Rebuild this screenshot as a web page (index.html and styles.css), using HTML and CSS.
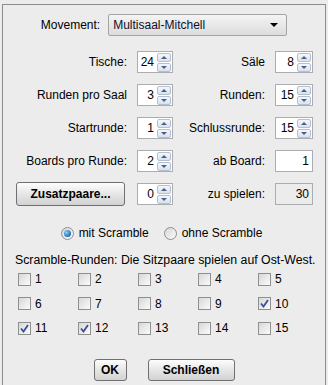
FILE: index.html
```html
<!DOCTYPE html>
<html lang="de">
<head>
    <meta charset="UTF-8">
    <title>Movement</title>
    <link rel="stylesheet" href="styles.css">
</head>
<body>
    <div class="panel">
        <div class="movement-row">
            <label>Movement:</label>
            <div class="combo">
                <span>Multisaal-Mitchell</span>
                <span class="combo-arrow"></span>
            </div>
        </div>

        <div class="form-grid">
            <label class="lbl">Tische:</label>
            <div class="spinner"><span class="value">24</span><div class="arrows"><span class="up"></span><span class="down"></span></div></div>
            <label class="lbl">Säle</label>
            <div class="spinner wide"><span class="value">8</span><div class="arrows"><span class="up"></span><span class="down"></span></div></div>

            <label class="lbl">Runden pro Saal</label>
            <div class="spinner"><span class="value">3</span><div class="arrows"><span class="up"></span><span class="down"></span></div></div>
            <label class="lbl">Runden:</label>
            <div class="spinner wide"><span class="value">15</span><div class="arrows"><span class="up"></span><span class="down"></span></div></div>

            <label class="lbl">Startrunde:</label>
            <div class="spinner"><span class="value">1</span><div class="arrows"><span class="up"></span><span class="down"></span></div></div>
            <label class="lbl">Schlussrunde:</label>
            <div class="spinner wide"><span class="value">15</span><div class="arrows"><span class="up"></span><span class="down"></span></div></div>

            <label class="lbl">Boards pro Runde:</label>
            <div class="spinner"><span class="value">2</span><div class="arrows"><span class="up"></span><span class="down"></span></div></div>
            <label class="lbl">ab Board:</label>
            <div class="field">1</div>

            <button class="btn extra">Zusatzpaare...</button>
            <div class="spinner"><span class="value">0</span><div class="arrows"><span class="up"></span><span class="down"></span></div></div>
            <label class="lbl">zu spielen:</label>
            <div class="field disabled">30</div>
        </div>

        <div class="radio-row">
            <span class="radio-option"><span class="radio checked"></span>mit Scramble</span>
            <span class="radio-option"><span class="radio"></span>ohne Scramble</span>
        </div>

        <p class="scramble-note">Scramble-Runden: Die Sitzpaare spielen auf Ost-West.</p>

        <div class="check-grid">
            <span class="check-option"><span class="box"></span>1</span>
            <span class="check-option"><span class="box"></span>2</span>
            <span class="check-option"><span class="box"></span>3</span>
            <span class="check-option"><span class="box"></span>4</span>
            <span class="check-option"><span class="box"></span>5</span>
            <span class="check-option"><span class="box"></span>6</span>
            <span class="check-option"><span class="box"></span>7</span>
            <span class="check-option"><span class="box"></span>8</span>
            <span class="check-option"><span class="box"></span>9</span>
            <span class="check-option"><span class="box checked"><svg viewBox="0 0 11 11"><path d="M2 5.5 L4.5 8.5 L9 2" /></svg></span>10</span>
            <span class="check-option"><span class="box checked"><svg viewBox="0 0 11 11"><path d="M2 5.5 L4.5 8.5 L9 2" /></svg></span>11</span>
            <span class="check-option"><span class="box checked"><svg viewBox="0 0 11 11"><path d="M2 5.5 L4.5 8.5 L9 2" /></svg></span>12</span>
            <span class="check-option"><span class="box"></span>13</span>
            <span class="check-option"><span class="box"></span>14</span>
            <span class="check-option"><span class="box"></span>15</span>
        </div>

        <div class="actions">
            <button class="btn ok">OK</button>
            <button class="btn close">Schließen</button>
        </div>
    </div>
</body>
</html>
```

FILE: styles.css
```css
body {
    margin: 0;
    background-color: #ececec;
    font-family: "Liberation Sans", Arial, sans-serif;
    font-size: 12px;
    color: #000;
}
.panel {
    margin: 4px 2px 0 2px;
    height: 381px;
    box-sizing: border-box;
    border: 1px solid #8c8c8c;
    border-bottom: none;
    padding: 9px 0 0 9px;
}
.movement-row {
    display: flex;
    align-items: center;
    justify-content: center;
    gap: 8px;
    padding-right: 9px;
}
.combo {
    width: 179px;
    height: 22px;
    box-sizing: border-box;
    border: 1px solid #a4a4a4;
    border-radius: 2px;
    background: linear-gradient(#f4f4f4, #dcdcdc);
    display: flex;
    align-items: center;
    justify-content: space-between;
    padding: 0 8px 0 4px;
    color: #10102c;
}
.combo-arrow {
    width: 0;
    height: 0;
    border-left: 4px solid transparent;
    border-right: 4px solid transparent;
    border-top: 4px solid #000;
}
.form-grid {
    display: grid;
    grid-template-columns: 115px 36px 82px 38px;
    grid-auto-rows: 22px;
    column-gap: 10px;
    row-gap: 11px;
    align-items: center;
    margin-top: 15px;
}
.lbl {
    text-align: right;
}
.spinner, .field {
    height: 22px;
    box-sizing: border-box;
    border: 1px solid #abadb3;
    background-color: #fff;
    display: flex;
    align-items: center;
}
.spinner .value {
    flex: 1;
    text-align: right;
    padding-right: 3px;
}
.arrows {
    width: 14px;
    display: flex;
    flex-direction: column;
    gap: 1px;
    margin-right: 1px;
}
.arrows span {
    height: 9px;
    box-sizing: border-box;
    border: 1px solid #b4c0d0;
    border-radius: 2px;
    background: linear-gradient(#f4f7fb, #d8e2ee);
    display: flex;
    align-items: center;
    justify-content: center;
}
.arrows .up::after, .arrows .down::after {
    content: "";
    width: 0;
    height: 0;
    border-left: 3px solid transparent;
    border-right: 3px solid transparent;
}
.arrows .up::after {
    border-bottom: 3px solid #4d5f86;
}
.arrows .down::after {
    border-top: 3px solid #4d5f86;
}
.field {
    justify-content: flex-end;
    padding-right: 3px;
}
.field.disabled {
    background-color: #ececec;
}
.btn {
    font-family: "Liberation Sans", Arial, sans-serif;
    font-size: 12px;
    font-weight: bold;
    color: #000;
    height: 23px;
    box-sizing: border-box;
    border: 1px solid #707070;
    border-radius: 3px;
    background: linear-gradient(#fdfdfd, #e6e6e6 50%, #d2d2d2);
    padding: 0;
}
.btn.extra {
    width: 109px;
    height: 24px;
    justify-self: end;
    margin-right: 2px;
}
.radio-row {
    display: flex;
    justify-content: center;
    gap: 15px;
    margin-top: 21px;
    padding-right: 14px;
}
.radio-option, .check-option {
    display: flex;
    align-items: center;
    gap: 5px;
}
.radio {
    width: 13px;
    height: 13px;
    box-sizing: border-box;
    border: 1px solid #8e8f8f;
    border-radius: 50%;
    background: linear-gradient(135deg, #d6d6d6, #fbfbfb);
    display: flex;
    align-items: center;
    justify-content: center;
}
.radio.checked::after {
    content: "";
    width: 7px;
    height: 7px;
    border-radius: 50%;
    background: radial-gradient(circle at 35% 35%, #8fd0f5, #1a6fb4 70%, #0f4f8c);
}
.scramble-note {
    margin: 13px 0 0 3px;
    font-size: 12.3px;
}
.check-grid {
    display: grid;
    grid-template-columns: repeat(5, 60px);
    grid-auto-rows: 24.5px;
    align-items: center;
    margin-top: 0;
    padding-left: 6px;
}
.check-option {
    gap: 4px;
}
.box {
    width: 13px;
    height: 13px;
    box-sizing: border-box;
    border: 1px solid #8e8f8f;
    background: linear-gradient(135deg, #d8d8d8, #fbfbfb);
    display: flex;
    align-items: center;
    justify-content: center;
}
.box svg {
    width: 11px;
    height: 11px;
}
.box svg path {
    fill: none;
    stroke: #3b4d9c;
    stroke-width: 1.8;
}
.actions {
    display: flex;
    justify-content: center;
    gap: 21px;
    margin-top: 18px;
    padding-right: 9px;
}
.btn.ok {
    width: 33px;
    height: 22px;
}
.btn.close {
    width: 87px;
    height: 22px;
}
```
